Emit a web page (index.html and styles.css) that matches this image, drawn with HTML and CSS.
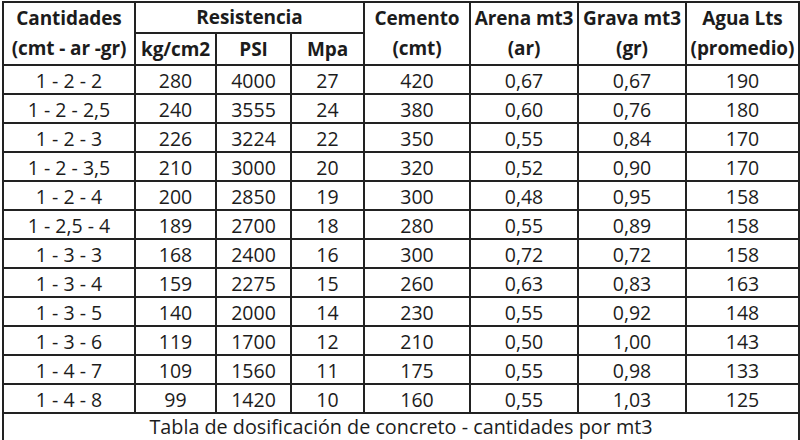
FILE: index.html
```html
<!DOCTYPE html>
<html lang="es">
<head>
<meta charset="utf-8">
<link rel="stylesheet" href="styles.css">
</head>
<body>
<table class="tabla">
  <colgroup>
    <col class="c1"><col class="c2"><col class="c3"><col class="c4"><col class="c5"><col class="c6"><col class="c7"><col class="c8">
  </colgroup>
  <thead>
    <tr class="h1">
      <th class="nb">Cantidades</th>
      <th colspan="3">Resistencia</th>
      <th class="nb">Cemento</th>
      <th class="nb">Arena mt3</th>
      <th class="nb">Grava mt3</th>
      <th class="nb">Agua Lts</th>
    </tr>
    <tr class="h2">
      <th class="nt">(cmt - ar -gr)</th>
      <th>kg/cm2</th>
      <th>PSI</th>
      <th>Mpa</th>
      <th class="nt">(cmt)</th>
      <th class="nt">(ar)</th>
      <th class="nt">(gr)</th>
      <th class="nt">(promedio)</th>
    </tr>
  </thead>
  <tbody>
    <tr><td>1 - 2 - 2</td><td>280</td><td>4000</td><td>27</td><td>420</td><td>0,67</td><td>0,67</td><td>190</td></tr>
    <tr><td>1 - 2 - 2,5</td><td>240</td><td>3555</td><td>24</td><td>380</td><td>0,60</td><td>0,76</td><td>180</td></tr>
    <tr><td>1 - 2 - 3</td><td>226</td><td>3224</td><td>22</td><td>350</td><td>0,55</td><td>0,84</td><td>170</td></tr>
    <tr><td>1 - 2 - 3,5</td><td>210</td><td>3000</td><td>20</td><td>320</td><td>0,52</td><td>0,90</td><td>170</td></tr>
    <tr><td>1 - 2 - 4</td><td>200</td><td>2850</td><td>19</td><td>300</td><td>0,48</td><td>0,95</td><td>158</td></tr>
    <tr><td>1 - 2,5 - 4</td><td>189</td><td>2700</td><td>18</td><td>280</td><td>0,55</td><td>0,89</td><td>158</td></tr>
    <tr><td>1 - 3 - 3</td><td>168</td><td>2400</td><td>16</td><td>300</td><td>0,72</td><td>0,72</td><td>158</td></tr>
    <tr><td>1 - 3 - 4</td><td>159</td><td>2275</td><td>15</td><td>260</td><td>0,63</td><td>0,83</td><td>163</td></tr>
    <tr><td>1 - 3 - 5</td><td>140</td><td>2000</td><td>14</td><td>230</td><td>0,55</td><td>0,92</td><td>148</td></tr>
    <tr><td>1 - 3 - 6</td><td>119</td><td>1700</td><td>12</td><td>210</td><td>0,50</td><td>1,00</td><td>143</td></tr>
    <tr><td>1 - 4 - 7</td><td>109</td><td>1560</td><td>11</td><td>175</td><td>0,55</td><td>0,98</td><td>133</td></tr>
    <tr><td>1 - 4 - 8</td><td>99</td><td>1420</td><td>10</td><td>160</td><td>0,55</td><td>1,03</td><td>125</td></tr>
  </tbody>
  <tfoot>
    <tr class="pie"><td colspan="8">Tabla de dosificación de concreto - cantidades por mt3</td></tr>
  </tfoot>
</table>
</body>
</html>
```

FILE: styles.css
```css
html, body {
  margin: 0;
  background: #ffffff;
}
body {
  padding: 1px 0 0 2px;
  font-family: "Open Sans", Lato, sans-serif;
  color: #1c1c1c;
}
.tabla {
  border-collapse: collapse;
  table-layout: fixed;
  width: 796px;
  border: 2px solid #222222;
}
.c1 { width: 132px; }
.c2 { width: 81px; }
.c3 { width: 75px; }
.c4 { width: 73px; }
.c5 { width: 106px; }
.c6 { width: 108px; }
.c7 { width: 108px; }
.c8 { width: 113px; }
.tabla th, .tabla td {
  border: 2px solid #222222;
  padding: 0;
  text-align: center;
  white-space: nowrap;
  overflow: hidden;
  line-height: 1;
}
.tabla th {
  font-weight: 700;
  font-size: 19px;
  letter-spacing: -0.1px;
}
.tabla td {
  font-size: 19.5px;
  font-weight: 400;
}
.h1 th { height: 29px; vertical-align: middle; }
.h2 th { height: 30px; }
.tabla th.nb { border-bottom: none; }
.tabla th.nt { border-top: none; }
.tabla tbody td { height: 25px; padding-top: 2px; }
.pie td { height: 26px; font-size: 19.8px; }
```
